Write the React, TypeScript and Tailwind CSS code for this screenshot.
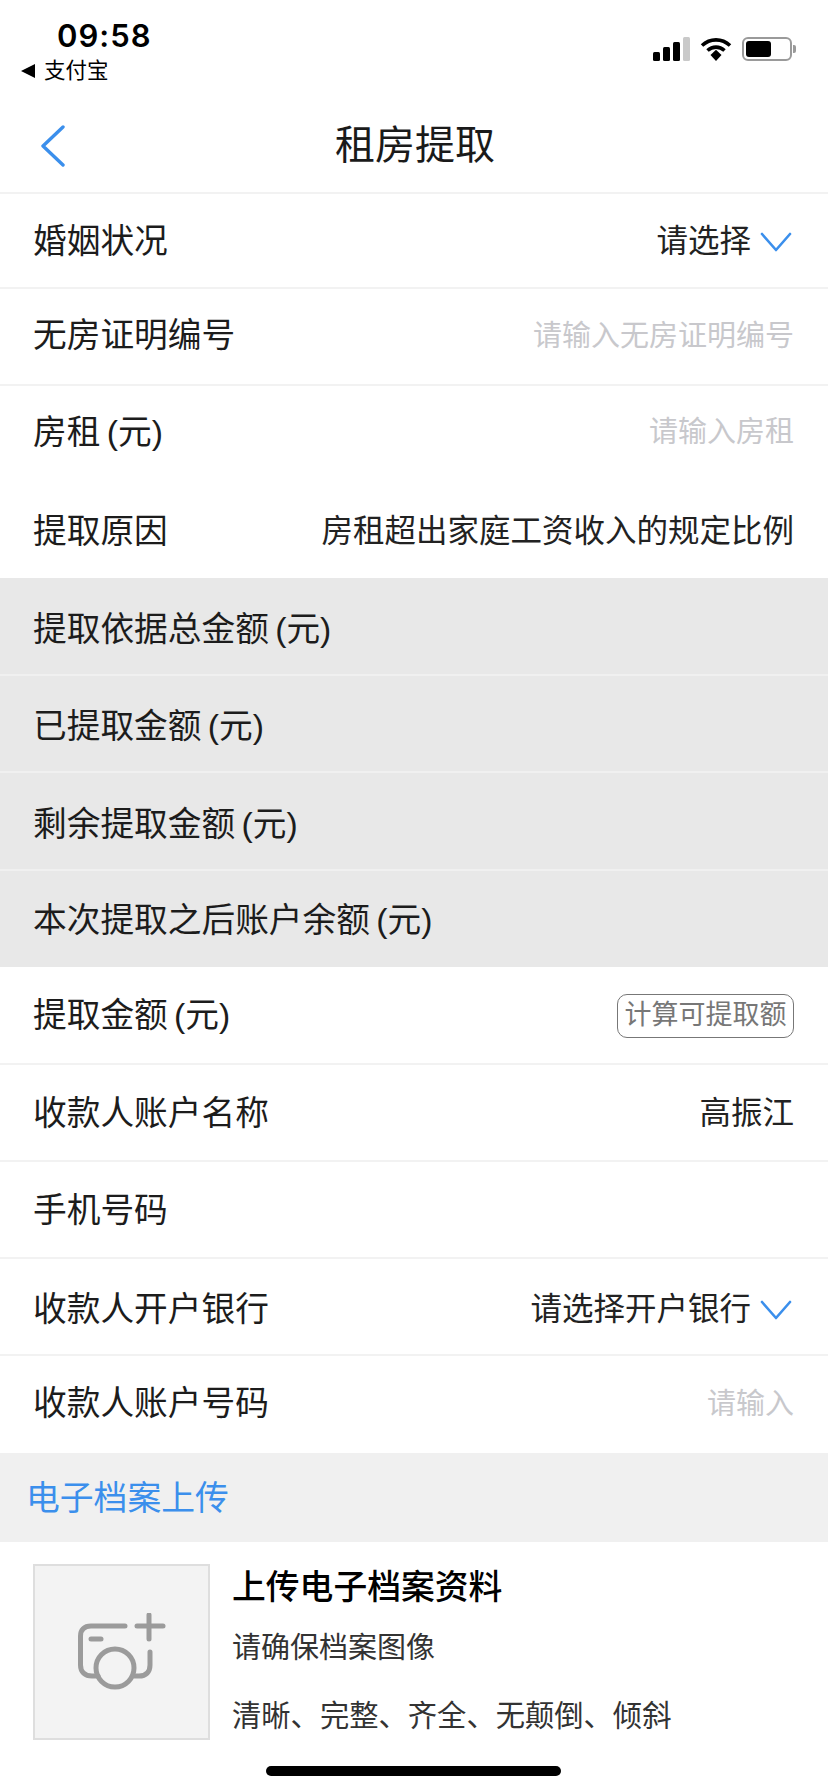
import React from "react";

const font = "font-['Liberation_Sans','Noto_Sans_CJK_SC',sans-serif]";

const Chevron = () => (
  <svg width="32" height="20" viewBox="0 0 32 20" fill="none" className="ml-[9px] mr-[2px]">
    <path d="M2 2L16 18L30 2" stroke="#3b8fec" strokeWidth="2.6" strokeLinecap="round" strokeLinejoin="round" />
  </svg>
);

const Row = ({
  label,
  h,
  pad = "pt-[3px]",
  line = true,
  gray = false,
  children,
}: {
  label: string;
  h: string;
  pad?: string;
  line?: boolean;
  gray?: boolean;
  children?: React.ReactNode;
}) => (
  <div
    className={`flex items-center justify-between pl-[33px] pr-[34px] ${pad} ${h} ${gray ? "bg-[#e8e8e8]" : "bg-white"} ${
      line ? (gray ? "border-b-2 border-[#f0f0f0]" : "border-b-2 border-[#f2f2f2]") : ""
    }`}
  >
    <span className="text-[33.7px] text-[#1c1c1c] leading-none whitespace-nowrap [word-spacing:-3px]">{label}</span>
    {children}
  </div>
);

const Value = ({ children }: { children: React.ReactNode }) => (
  <span className="text-[31.5px] text-[#222222] leading-none whitespace-nowrap">{children}</span>
);

const Placeholder = ({ children }: { children: React.ReactNode }) => (
  <span className="text-[29px] text-[#c8c8cc] leading-none whitespace-nowrap">{children}</span>
);

export default function App() {
  return (
    <div className={`relative w-[828px] h-[1792px] bg-white overflow-hidden ${font}`}>
      {/* status bar */}
      <div className="h-[96px] flex justify-between">
        <div className="pl-[21px] pt-[18px]">
          <div className="pl-[36px] font-['Inter',sans-serif] text-[31px] leading-[36px] font-semibold tracking-[1px] text-black">09:58</div>
          <div className="flex items-center mt-[4px]">
            <svg width="14" height="14" viewBox="0 0 14 14">
              <path d="M14 0V14L0 7Z" fill="#000" />
            </svg>
            <span className="ml-[9px] text-[21.5px] leading-[26px] text-black">支付宝</span>
          </div>
        </div>
        <div className="flex items-center gap-[10px] pr-[32px] pt-[2px] h-[96px]">
          <svg width="37" height="24" viewBox="0 0 37 24">
            <rect x="0" y="15" width="7" height="9" rx="1.5" fill="#000" />
            <rect x="10" y="10" width="7" height="14" rx="1.5" fill="#000" />
            <rect x="20" y="5" width="7" height="19" rx="1.5" fill="#000" />
            <rect x="30" y="0" width="7" height="24" rx="1.5" fill="#c9c9c9" />
          </svg>
          <svg width="32" height="24" viewBox="0 0 32 24" fill="none">
            <path d="M2 8.5C10 1 22 1 30 8.5" stroke="#000" strokeWidth="3.6" />
            <path d="M7.5 13.5C12.5 9 19.5 9 24.5 13.5" stroke="#000" strokeWidth="3.6" />
            <path d="M10.5 18L16 12.8L21.5 18L16 24Z" fill="#000" />
          </svg>
          <div className="flex items-center">
            <div className="w-[50px] h-[24px] rounded-[6px] border-2 border-[#9a9a9a] p-[2px]">
              <div className="w-[25px] h-full rounded-[3px] bg-black" />
            </div>
            <div className="ml-[1px] w-[3px] h-[8px] rounded-r-[2px] bg-[#9a9a9a]" />
          </div>
        </div>
      </div>

      {/* nav */}
      <div className="relative h-[98px] flex items-center justify-center pl-[2px] pt-[1px] border-b-2 border-[#f2f2f2]">
        <svg width="26" height="42" viewBox="0 0 26 42" fill="none" className="absolute left-[40px] top-[29px]">
          <path d="M23 2L3 21L23 40" stroke="#3b8fec" strokeWidth="3.4" strokeLinecap="round" strokeLinejoin="round" />
        </svg>
        <span className="text-[40px] leading-none text-[#1a1a1a]">租房提取</span>
      </div>

      <Row label="婚姻状况" h="h-[95px]">
        <div className="flex items-center">
          <Value>请选择</Value>
          <Chevron />
        </div>
      </Row>
      <Row label="无房证明编号" h="h-[97px]" pad="pb-[1px]">
        <Placeholder>请输入无房证明编号</Placeholder>
      </Row>
      <Row label="房租 (元)" h="h-[96px]" pad="pb-[3px]" line={false}>
        <Placeholder>请输入房租</Placeholder>
      </Row>
      <Row label="提取原因" h="h-[96px]" line={false}>
        <Value>房租超出家庭工资收入的规定比例</Value>
      </Row>
      <Row label="提取依据总金额 (元)" h="h-[98px]" pad="pt-[7px]" gray />
      <Row label="已提取金额 (元)" h="h-[97px]" pad="pt-[7px]" gray />
      <Row label="剩余提取金额 (元)" h="h-[98px]" pad="pt-[7px]" gray />
      <Row label="本次提取之后账户余额 (元)" h="h-[96px]" gray line={false} />
      <Row label="提取金额 (元)" h="h-[98px]" pad="pt-[1px]">
        <button className="w-[177px] h-[44px] rounded-[10px] border border-[#777777] text-[27px] leading-none text-[#777777] flex items-center justify-center">
          计算可提取额
        </button>
      </Row>
      <Row label="收款人账户名称" h="h-[97px]">
        <Value>高振江</Value>
      </Row>
      <Row label="手机号码" h="h-[97px]" />
      <Row label="收款人开户银行" h="h-[97px]" pad="pt-[7px]">
        <div className="flex items-center">
          <Value>请选择开户银行</Value>
          <Chevron />
        </div>
      </Row>
      <Row label="收款人账户号码" h="h-[97px]" pad="pb-[1px]" line={false}>
        <Placeholder>请输入</Placeholder>
      </Row>

      {/* section header */}
      <div className="h-[89px] bg-[#f0f0f0] flex items-center pl-[26px] pt-[3px]">
        <span className="text-[33.8px] leading-none text-[#3b8fec]">电子档案上传</span>
      </div>

      {/* upload */}
      <div className="flex pl-[33px] pt-[22px]">
        <div className="w-[177px] h-[176px] bg-[#f3f3f3] border-2 border-[#dedede] flex items-center justify-center">
          <svg width="88" height="78" viewBox="0 0 88 78" fill="none" stroke="#9b9b9b" strokeWidth="5" strokeLinecap="round">
            <path d="M47 13H13C6 13 2.5 17 2.5 23V52C2.5 59 7 63 14 63H20" />
            <path d="M13 26H23" />
            <circle cx="37" cy="55" r="19" />
            <path d="M56 63H61C68 63 72 59 72 52V39" />
            <path d="M59 13H85" />
            <path d="M71 2V26" />
          </svg>
        </div>
        <div className="ml-[22px]">
          <div className="text-[33.8px] leading-none font-medium text-black mt-[7px]">上传电子档案资料</div>
          <div className="text-[29px] leading-none text-[#333333] mt-[29px]">请确保档案图像</div>
          <div className="text-[29.3px] leading-none text-[#333333] mt-[38px]">清晰、完整、齐全、无颠倒、倾斜</div>
        </div>
      </div>

      <div className="absolute left-[266px] top-[1766px] w-[295px] h-[10px] rounded-full bg-black" />
    </div>
  );
}
